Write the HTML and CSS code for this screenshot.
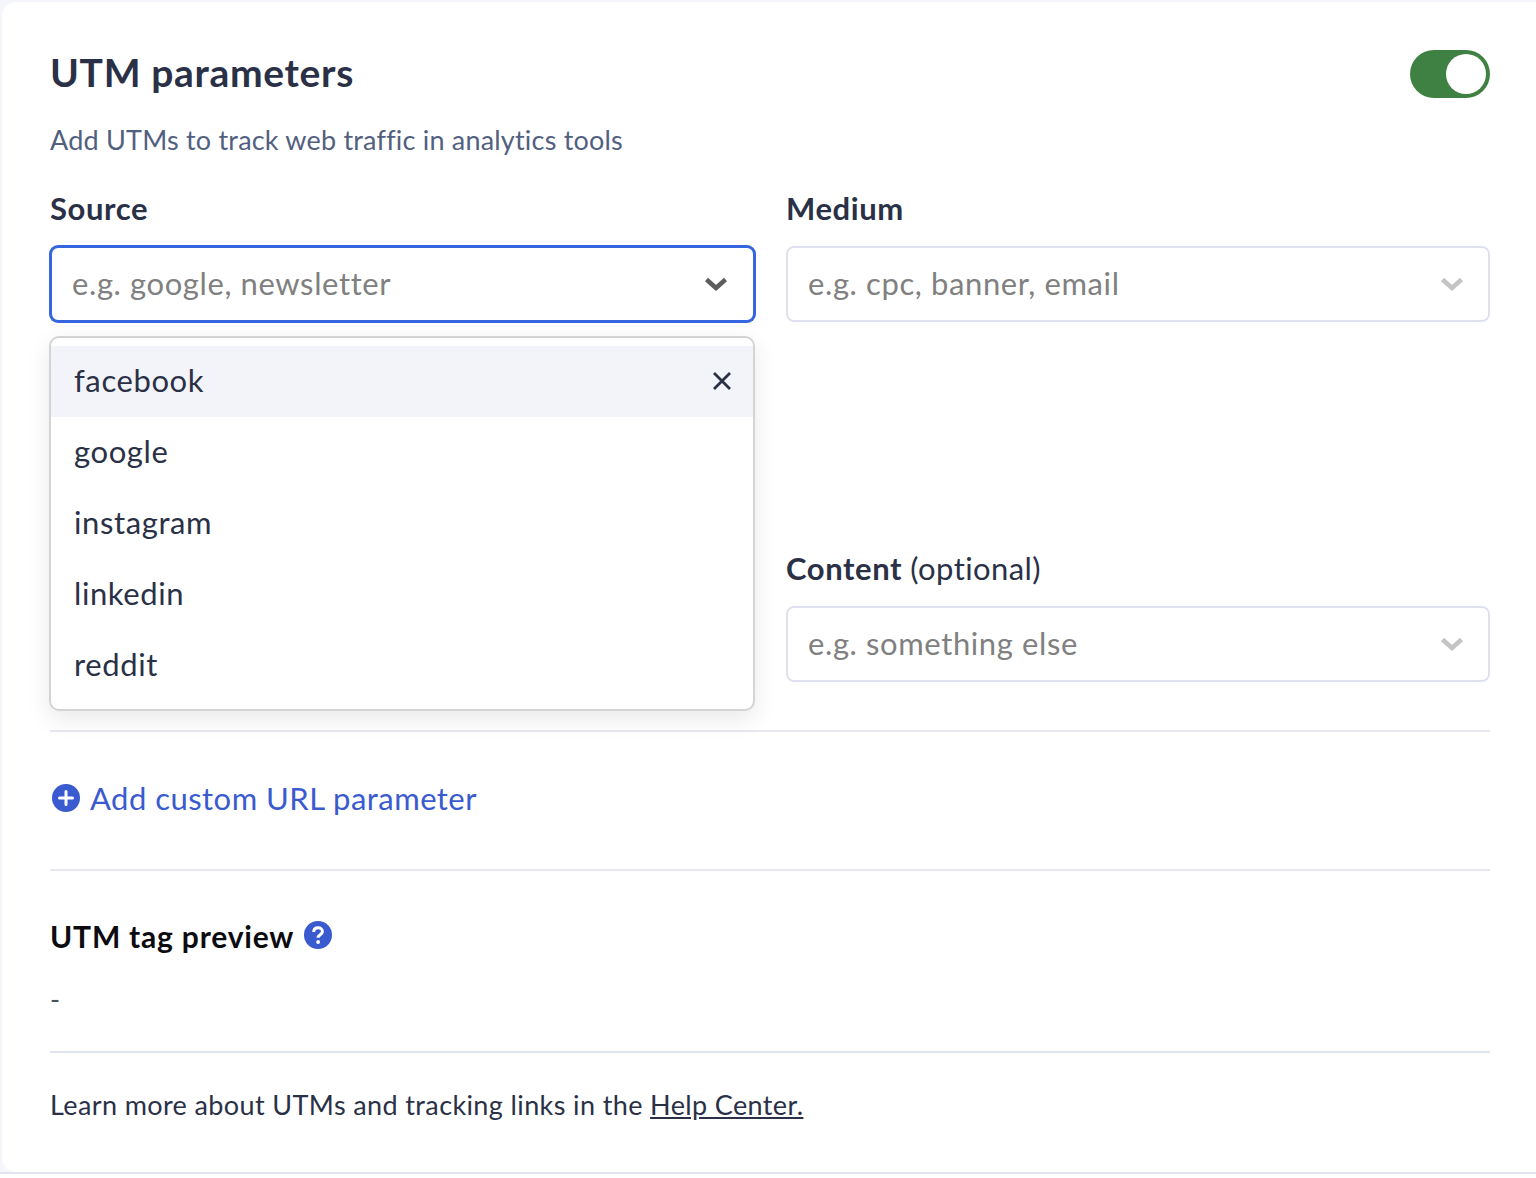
FILE: index.html
```html
<!DOCTYPE html>
<html lang="en">
<head>
<meta charset="utf-8">
<title>UTM parameters</title>
<link rel="stylesheet" href="styles.css">
</head>
<body>
<main class="card">
  <header class="head">
    <h1 class="title">UTM parameters</h1>
    <span class="toggle"><span class="knob"></span></span>
  </header>
  <p class="sub">Add UTMs to track web traffic in analytics tools</p>
  <div class="fields">
    <div class="field">
      <label class="label">Source</label>
      <div class="select focused">
        <span class="ph">e.g. google, newsletter</span>
        <svg class="chev dark" viewBox="0 0 24 14"><path d="M2.5 2.5 12 11 21.500 2.500"/></svg>
      </div>
      <ul class="menu">
        <li class="opt active">facebook<svg class="x" viewBox="0 0 20 20"><path d="M2 2 18 18M18 2 2 18"/></svg></li>
        <li class="opt">google</li>
        <li class="opt">instagram</li>
        <li class="opt">linkedin</li>
        <li class="opt">reddit</li>
      </ul>
    </div>
    <div class="field">
      <label class="label">Medium</label>
      <div class="select">
        <span class="ph">e.g. cpc, banner, email</span>
        <svg class="chev" viewBox="0 0 24 14"><path d="M2.5 2.5 12 11 21.500 2.500"/></svg>
      </div>
    </div>
    <div class="field"></div>
    <div class="field">
      <label class="label">Content <span class="opt-note">(optional)</span></label>
      <div class="select">
        <span class="ph">e.g. something else</span>
        <svg class="chev" viewBox="0 0 24 14"><path d="M2.5 2.5 12 11 21.500 2.500"/></svg>
      </div>
    </div>
  </div>
  <section class="add">
    <a class="add-link">
      <svg class="ico" viewBox="0 0 28 28"><circle cx="14" cy="14" r="14" fill="#3a5bd0"/><path d="M14 7.500V20.500M7.500 14H20.500" stroke="#fff" stroke-width="3" stroke-linecap="round"/></svg>
      Add custom URL parameter
    </a>
  </section>
  <section class="preview">
    <h2 class="preview-title">UTM tag preview
      <svg class="ico help" viewBox="0 0 28 28"><circle cx="14" cy="14" r="14" fill="#3a5bd0"/><path d="M9.700 11c0-2.700 1.900-4.200 4.400-4.200s4.300 1.500 4.300 3.700c0 3.300-4.300 3.200-4.300 6.300" fill="none" stroke="#fff" stroke-width="3"/><circle cx="14.100" cy="21" r="1.900" fill="#fff"/></svg>
    </h2>
    <p class="dash">-</p>
  </section>
  <footer class="foot">Learn more about UTMs and tracking links in the <a class="help-link">Help Center.</a></footer>
</main>
</body>
</html>
```

FILE: styles.css
```css
* { box-sizing: border-box; }
html { margin: 0; background: #fff; }
body {
  margin: 0;
  height: 1174px;
  background: #f5f6fb;
  border-bottom: 2px solid #e1e4f0;
  padding: 2px 0 0 2px;
  font-family: "Lato", "Liberation Sans", sans-serif;
  font-variant-ligatures: none;
  color: #2a3147;
  overflow: hidden;
}
.card {
  background: #fff;
  height: 100%;
  border-radius: 14px 0 0 14px;
  padding: 44px 46px 0 48px;
}
.head { display: flex; justify-content: space-between; align-items: center; height: 56px; }
.title { margin: 0; align-self: flex-start; font-size: 39px; font-weight: 700; line-height: 52px; letter-spacing: 0.65px; }
.toggle {
  width: 80px; height: 48px; border-radius: 24px; background: #3f8142;
  display: flex; justify-content: flex-end; align-items: center; padding-right: 4px;
}
.knob { width: 40px; height: 40px; border-radius: 50%; background: #fff; }
.sub { margin: 21px 0 0; font-size: 27px; line-height: 34px; color: #52607f; letter-spacing: 0.2px; }
.fields { display: grid; grid-template-columns: 1fr 1fr; column-gap: 32px; margin-top: 32px; margin-bottom: 48px; }
.field { position: relative; height: 360px; }
.field:nth-child(n+3) { height: 133px; }
.label { display: block; font-size: 31px; line-height: 38px; font-weight: 700; letter-spacing: 0.6px; color: #2a3147; }
.opt-note { font-weight: 400; letter-spacing: 0.4px; }
.select {
  margin-top: 19px; height: 76px; border: 2px solid #dfe2ee; border-radius: 8px;
  display: flex; align-items: center; justify-content: space-between; padding: 0 24px 0 20px;
  background: #fff;
}
.select.focused { margin-right: -1px; padding-right: 25px; border: 2px solid #3566e0; box-shadow: 0 0 0 1px #3566e0; }
.ph { margin-bottom: 2px; font-size: 31px; color: #808080; letter-spacing: 0.6px; }
.chev { width: 24px; height: 14px; fill: none; stroke: #c4c4c4; stroke-width: 4.500; }
.chev.dark { stroke: #5d5d5d; }
.menu {
  position: absolute; left: -1px; right: -1px; top: 147px; z-index: 2; margin: 0; padding: 8px 0 0; height: 375px;
  list-style: none; background: #fff; border: 2px solid #d4d4d4; border-radius: 10px;
  box-shadow: 0 8px 24px rgba(0,0,0,.09);
}
.opt {
  height: 71px; display: flex; align-items: center; justify-content: space-between;
  padding: 0 21px 4px 23px; font-size: 31px; letter-spacing: 0.6px; color: #2a3147;
}
.opt.active { background: #f3f4f9; }
.x { width: 20px; height: 20px; margin-top: 2px; fill: none; stroke: #2a3147; stroke-width: 2.800; }
.add { border-top: 2px solid #e8e8f0; height: 139px; padding-top: 46px; }
.add-link { display: flex; align-items: center; gap: 10px; font-size: 31px; line-height: 40px; color: #3a5bd0; letter-spacing: 0.47px; }
.ico { width: 28px; height: 28px; flex: none; margin-left: 2px; }
.preview { border-top: 2px solid #e8e8f0; height: 182px; padding-top: 45px; }
.preview-title { margin: 0; font-size: 30px; line-height: 40px; font-weight: 700; color: #0c0c10; letter-spacing: 0.8px; }
.help { margin-left: 2px; vertical-align: -1px; }
.dash { margin: 26px 0 0; font-size: 27px; line-height: 34px; color: #4a4f5e; }
.foot { border-top: 2px solid #e1e4f0; padding-top: 35px; font-size: 27px; line-height: 34px; letter-spacing: 0.38px; color: #2a3147; }
.help-link { text-decoration: underline; }
```
